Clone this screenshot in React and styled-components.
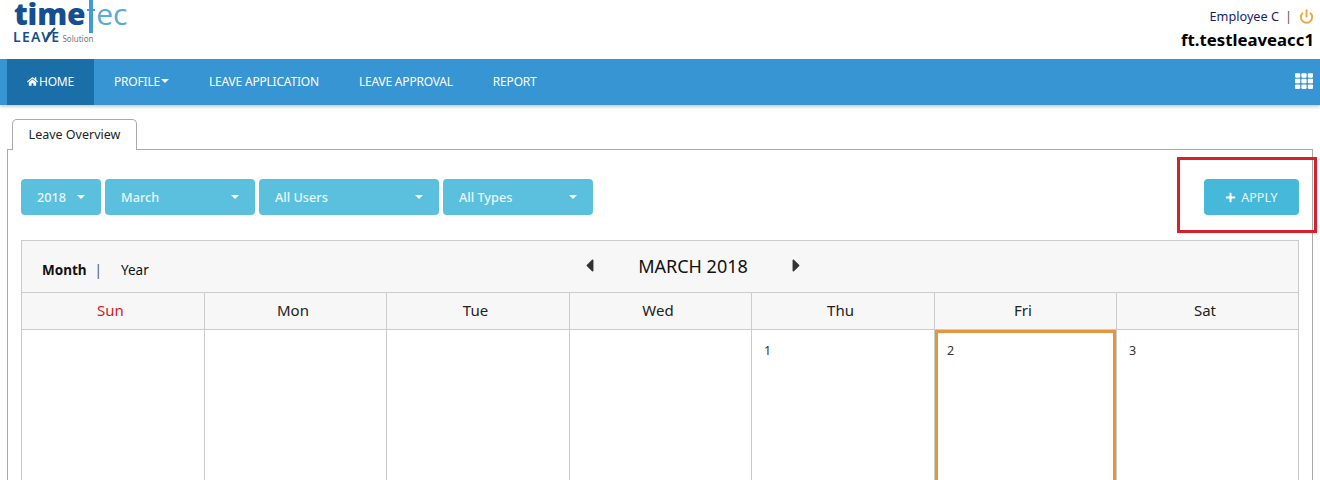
import React from 'react';
import styled, { createGlobalStyle } from 'styled-components';
import { FaHome, FaPlus, FaTh, FaCaretLeft, FaCaretRight } from 'react-icons/fa';
import { Power } from 'lucide-react';

const Global = createGlobalStyle`
    html, body {
        margin: 0;
        padding: 0;
        height: 480px;
        overflow: hidden;
        background: #fff;
        font-family: "Noto Sans", "Liberation Sans", sans-serif;
    }
    * { box-sizing: border-box; }
`;

const Page = styled.div`
    position: relative;
    width: 1320px;
    height: 480px;
    overflow: hidden;
`;

const Header = styled.header`
    height: 59px;
    display: flex;
    justify-content: space-between;
    padding: 0 6px 0 13px;
`;

const Logo = styled.div`
    width: 120px;
    display: flex;
    flex-direction: column;
`;

const LogoWord = styled.div`
    display: flex;
    align-items: flex-start;
    height: 27px;
    padding-left: 1px;
    font-family: "Open Sans", sans-serif;
    font-size: 30px;
    line-height: 27px;
    font-weight: 800;
    letter-spacing: -0.2px;
    color: #14508f;
`;

const LogoBar = styled.span`
    position: relative;
    flex: none;
    width: 4px;
    height: 33px;
    margin: 0 3px 0 4px;
    background: #3f9ad6;

    &::after {
        content: '';
        position: absolute;
        left: -2px;
        top: 9px;
        width: 8px;
        height: 2px;
        background: #3f9ad6;
    }
`;

const LogoEc = styled.span`
    color: #55abd9;
    font-size: 30px;
    font-weight: 500;
`;

const LogoSub = styled.div`
    position: relative;
    display: flex;
    align-items: baseline;
    margin-top: 3px;
    font-size: 14px;
    line-height: 14px;
    letter-spacing: 1.3px;
    font-weight: 600;
    color: #14508f;
`;

const LogoCheck = styled.svg`
    position: absolute;
    left: 30px;
    top: -3px;
    width: 14px;
    height: 16px;
`;

const LogoSmall = styled.span`
    margin-left: 2px;
    font-size: 8px;
    letter-spacing: 0;
    font-weight: 400;
    color: #777;
`;

const UserBox = styled.div`
    display: flex;
    flex-direction: column;
    align-items: flex-end;
    padding-top: 6px;
`;

const UserLine = styled.div`
    display: flex;
    align-items: center;
    height: 20px;
    font-size: 12.7px;
    color: #1b1b6b;
`;

const Sep = styled.span`
    margin: 0 7px 0 6px;
    color: #555;
`;

const Account = styled.div`
    margin-top: 3px;
    font-size: 16.75px;
    line-height: 22px;
    font-weight: 700;
    color: #000;
`;

const Nav = styled.nav`
    height: 46px;
    display: flex;
    align-items: stretch;
    padding: 0 7px;
    background: #3795d3;
    box-shadow: 0 2px 3px rgba(0, 0, 0, 0.2);
`;

const NavItem = styled.a`
    display: flex;
    align-items: center;
    gap: 1px;
    padding: 0 20px 2px;
    font-size: 12px;
    letter-spacing: -0.2px;
    color: #fff;
    background: ${(p) => (p.$active ? '#1a6fa8' : 'transparent')};
`;

const NavRight = styled.div`
    margin-left: auto;
    display: flex;
    align-items: center;
    padding-bottom: 2px;
    color: #fff;
    font-size: 18px;
`;

const Caret = styled.span`
    display: inline-block;
    width: 0;
    height: 0;
    border-left: 4px solid transparent;
    border-right: 4px solid transparent;
    border-top: 4px solid #fff;
`;

const Content = styled.main`
    padding: 14px 7px 0;
`;

const Tabs = styled.div`
    display: flex;
    padding-left: 5px;
    margin-bottom: -1px;
`;

const Tab = styled.div`
    position: relative;
    z-index: 1;
    width: 125px;
    height: 31px;
    display: flex;
    align-items: center;
    justify-content: center;
    padding-bottom: 2px;
    font-size: 12.5px;
    color: #222;
    background: #fff;
    border: 1px solid #aaa;
    border-bottom: none;
    border-radius: 5px 5px 0 0;
`;

const Panel = styled.section`
    height: 400px;
    padding: 29px 13px 0;
    border: 1px solid #aaa;
`;

const Filters = styled.div`
    display: flex;
    gap: 4px;
`;

const Filter = styled.div`
    width: ${(p) => p.$w}px;
    height: 36px;
    display: flex;
    align-items: center;
    justify-content: space-between;
    padding: 0 16px;
    font-size: 12.7px;
    font-weight: 500;
    color: #e8f7fc;
    background: #5bc0de;
    border-radius: 4px;
`;

const Apply = styled.div`
    margin-left: auto;
    width: 95px;
    height: 36px;
    display: flex;
    align-items: center;
    justify-content: center;
    gap: 5px;
    font-size: 12.5px;
    color: #e8f7fc;
    background: #46b8da;
    border-radius: 4px;

    svg {
        color: #fff;
    }
`;

const Calendar = styled.div`
    margin-top: 25px;
    border: 1px solid #ccc;
    border-bottom: none;
`;

const CalBar = styled.div`
    height: 52px;
    display: grid;
    grid-template-columns: 537px 228px;
    align-items: center;
    padding: 0 20px;
    background: #f7f7f7;
    border-bottom: 1px solid #ccc;
`;

const Views = styled.div`
    display: flex;
    align-items: center;
    padding-top: 6px;
    font-size: 13.5px;
    color: #111;
`;

const ViewActive = styled.b`
    font-weight: 700;
`;

const ViewSep = styled.span`
    margin: 0 19px 0 8px;
    color: #555;
`;

const MonthNav = styled.div`
    display: flex;
    align-items: center;
    justify-content: space-between;
    padding-bottom: 2px;
    font-size: 18px;
    color: #111;
`;

const Arrow = styled.span`
    display: flex;
    font-size: 21px;
    color: #333;
`;

const Grid = styled.div`
    display: grid;
    grid-template-columns: 182px 182px 183px 182px 183px 182px 182px;
`;

const DayHead = styled.div`
    height: 37px;
    display: flex;
    align-items: center;
    justify-content: center;
    padding: 0 5px 2px 0;
    font-size: 15px;
    color: ${(p) => (p.$red ? '#d3201f' : '#222')};
    background: #f7f7f7;
    border-left: ${(p) => (p.$first ? 'none' : '1px solid #ccc')};
    border-bottom: 1px solid #ccc;
`;

const Cell = styled.div`
    height: 160px;
    padding: 12px;
    font-size: 12.5px;
    line-height: 18px;
    color: #333;
    border-left: ${(p) => (p.$first ? 'none' : '1px solid #ccc')};
    box-shadow: ${(p) => (p.$today ? 'inset 0 0 0 3px #e3963e' : 'none')};
`;

const Marker = styled.div`
    position: absolute;
    left: 1177px;
    top: 157px;
    width: 140px;
    height: 76px;
    border: 3px solid #d8202c;
    pointer-events: none;
`;

const days = ['Sun', 'Mon', 'Tue', 'Wed', 'Thu', 'Fri', 'Sat'];
const cells = ['', '', '', '', '1', '2', '3'];
const filters = [
    { label: '2018', w: 80 },
    { label: 'March', w: 150 },
    { label: 'All Users', w: 180 },
    { label: 'All Types', w: 150 },
];

const App = () => {
    return (
        <Page>
            <Global />
            <Header>
                <Logo>
                    <LogoWord>
                        time<LogoBar /><LogoEc>ec</LogoEc>
                    </LogoWord>
                    <LogoSub>
                        LEAVE<LogoSmall>Solution</LogoSmall>
                        <LogoCheck viewBox="0 0 14 16">
                            <path d="M2 15 Q5 9 12 1" fill="none" stroke="#14508f" strokeWidth="2" />
                        </LogoCheck>
                    </LogoSub>
                </Logo>
                <UserBox>
                    <UserLine>
                        Employee C<Sep>|</Sep>
                        <Power size={15} color="#e8a93f" strokeWidth={3} />
                    </UserLine>
                    <Account>ft.testleaveacc1</Account>
                </UserBox>
            </Header>
            <Nav>
                <NavItem $active><FaHome size={11} /> HOME</NavItem>
                <NavItem>PROFILE <Caret /></NavItem>
                <NavItem>LEAVE APPLICATION</NavItem>
                <NavItem>LEAVE APPROVAL</NavItem>
                <NavItem>REPORT</NavItem>
                <NavRight><FaTh /></NavRight>
            </Nav>
            <Content>
                <Tabs><Tab>Leave Overview</Tab></Tabs>
                <Panel>
                    <Filters>
                        {filters.map((f) => (
                            <Filter key={f.label} $w={f.w}>{f.label}<Caret /></Filter>
                        ))}
                        <Apply><FaPlus size={11} /> APPLY</Apply>
                    </Filters>
                    <Calendar>
                        <CalBar>
                            <Views>
                                <ViewActive>Month</ViewActive><ViewSep>|</ViewSep>Year
                            </Views>
                            <MonthNav>
                                <Arrow><FaCaretLeft /></Arrow>
                                MARCH 2018
                                <Arrow><FaCaretRight /></Arrow>
                            </MonthNav>
                        </CalBar>
                        <Grid>
                            {days.map((d, i) => (
                                <DayHead key={d} $red={i === 0} $first={i === 0}>{d}</DayHead>
                            ))}
                            {cells.map((c, i) => (
                                <Cell key={i} $first={i === 0} $today={c === '2'}>{c}</Cell>
                            ))}
                        </Grid>
                    </Calendar>
                </Panel>
            </Content>
            <Marker />
        </Page>
    );
};

export default App;
